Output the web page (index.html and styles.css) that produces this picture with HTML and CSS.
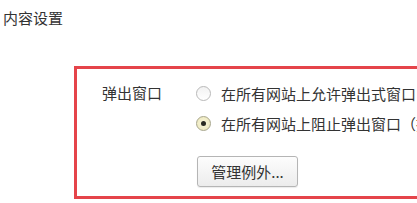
FILE: index.html
```html
<!DOCTYPE html>
<html lang="zh-CN">
<head>
<meta charset="UTF-8" />
<title>内容设置</title>
<link rel="stylesheet" href="styles.css">
</head>
<body>

<div class="page">
  <h1 class="title">内容设置</h1>

  <!-- Popup settings -->
  <section class="setting-box">
    <div class="setting-label">弹出窗口</div>
    <div class="setting-options">
      <label class="option">
        <span class="radio"></span>
        <span>在所有网站上允许弹出式窗口</span>
      </label>
      <label class="option">
        <span class="radio checked"></span>
        <span>在所有网站上阻止弹出窗口（推荐）</span>
      </label>
      <button type="button" class="btn">管理例外...</button>
    </div>
  </section>
</div>

</body>
</html>
```

FILE: styles.css
```css
/* Reset & base */
*, *::before, *::after {
  box-sizing: border-box;
}
html, body {
  overflow: hidden;
}
body {
  margin: 0;
  background: #fff;
  color: #333;
  font-family: "Noto Sans CJK SC", "Liberation Sans", sans-serif;
  font-size: 15px;
}

.page {
  padding: 8px 0 0 3px;
}

.title {
  margin: 0;
  font-size: 15px;
  font-weight: normal;
  line-height: 20px;
}

/* Red highlighted box */
.setting-box {
  display: flex;
  width: 420px;
  margin: 38px 0 0 71px;
  padding: 9px 0 9px 25px;
  border: 3px solid #e5444a;
  border-right: none;
}

.setting-label {
  width: 94px;
  line-height: 30px;
  white-space: nowrap;
}

.setting-options {
  display: flex;
  flex-direction: column;
  align-items: flex-start;
}

.option {
  display: flex;
  align-items: center;
  gap: 10px;
  height: 30px;
  white-space: nowrap;
}

/* Radio */
.radio {
  width: 15px;
  height: 15px;
  flex: none;
  border: 1px solid #b9b9b9;
  border-radius: 50%;
  background: linear-gradient(#f2f2f2, #fff);
  position: relative;
}
.radio.checked {
  border-color: #a8a68c;
  background: radial-gradient(circle, #fbf8dc 0%, #e9e4b8 100%);
}
.radio.checked::after {
  content: "";
  position: absolute;
  left: 4px;
  top: 4px;
  width: 5px;
  height: 5px;
  border-radius: 50%;
  background: #2a2a22;
}

/* Button */
.btn {
  margin-top: 18px;
  margin-left: 1px;
  width: 101px;
  height: 31px;
  padding: 0;
  font-family: inherit;
  font-size: 15px;
  color: #333;
  border: 1px solid #b5b5b5;
  border-radius: 3px;
  background: linear-gradient(#fdfdfd, #ececec);
  box-shadow: 0 1px 1px rgb(0 0 0 / 0.08);
}
```
